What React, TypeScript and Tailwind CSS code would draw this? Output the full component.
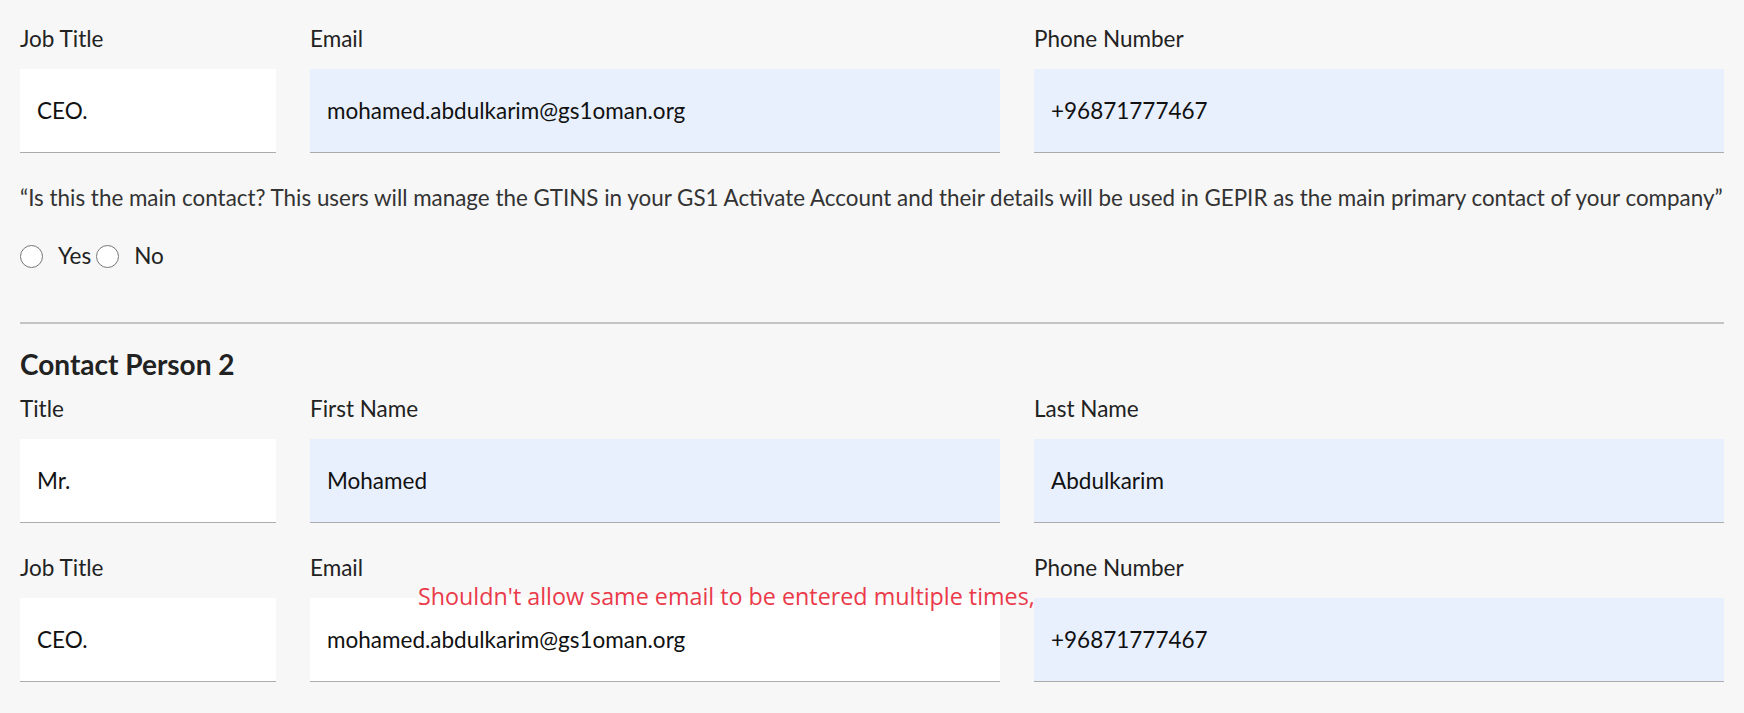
import React from 'react';

type Field = { label: string; value: string; filled?: boolean; note?: string };

function FieldBox({ label, value, filled, note }: Field) {
  return (
    <div className="relative flex flex-col">
      <label className="mb-[17px] text-[22.5px] leading-[26px] text-[#222]">{label}</label>
      <div
        className={
          'flex h-[84px] items-center border-b border-[#acacac] px-[17px] text-[22.5px] text-[#111] ' +
          (filled ? 'bg-[#e8f0fe]' : 'bg-white')
        }
      >
        {value}
      </div>
      {note && (
        <span className="absolute left-[108px] top-[24px] whitespace-nowrap font-['Open_Sans',sans-serif] text-[23.3px] text-[#ea3a4a]">
          {note}
        </span>
      )}
    </div>
  );
}

function Row({ fields }: { fields: Field[] }) {
  return (
    <div className="grid grid-cols-[256px_1fr_1fr] gap-x-[34px]">
      {fields.map((f) => (
        <FieldBox key={f.label} {...f} />
      ))}
    </div>
  );
}

function Radio({ label }: { label: string }) {
  return (
    <label className="flex items-center">
      <span className="h-[23px] w-[23px] rounded-full border-[1.5px] border-[#767676] bg-white" />
      <span className="ml-[15px]">{label}</span>
    </label>
  );
}

export default function App() {
  return (
    <div className="min-h-[713px] bg-[#f7f7f7] px-5 pt-[26px] font-['Lato',sans-serif] text-[#222]">
      <Row
        fields={[
          { label: 'Job Title', value: 'CEO.' },
          { label: 'Email', value: 'mohamed.abdulkarim@gs1oman.org', filled: true },
          { label: 'Phone Number', value: '+96871777467', filled: true },
        ]}
      />

      <p className="mt-[32px] text-[22.4px] leading-[26px] text-[#333]">
        “Is this the main contact? This users will manage the GTINS in your GS1 Activate Account and their details will be used in GEPIR as the main primary contact of your company”
      </p>

      <div className="mt-[32px] flex items-center gap-[5px] text-[22.5px] leading-[26px]">
        <Radio label="Yes" />
        <Radio label="No" />
      </div>

      <hr className="mt-[53px] border-t-2 border-[#c4c4c4]" />

      <h2 className="mt-[23px] text-[28px] font-bold leading-[34px] text-[#222]">Contact Person 2</h2>

      <div className="mt-[15px] flex flex-col gap-[32px]">
        <Row
          fields={[
            { label: 'Title', value: 'Mr.' },
            { label: 'First Name', value: 'Mohamed', filled: true },
            { label: 'Last Name', value: 'Abdulkarim', filled: true },
          ]}
        />
        <Row
          fields={[
            { label: 'Job Title', value: 'CEO.' },
            {
              label: 'Email',
              value: 'mohamed.abdulkarim@gs1oman.org',
              note: "Shouldn't allow same email to be entered multiple times,",
            },
            { label: 'Phone Number', value: '+96871777467', filled: true },
          ]}
        />
      </div>
    </div>
  );
}
